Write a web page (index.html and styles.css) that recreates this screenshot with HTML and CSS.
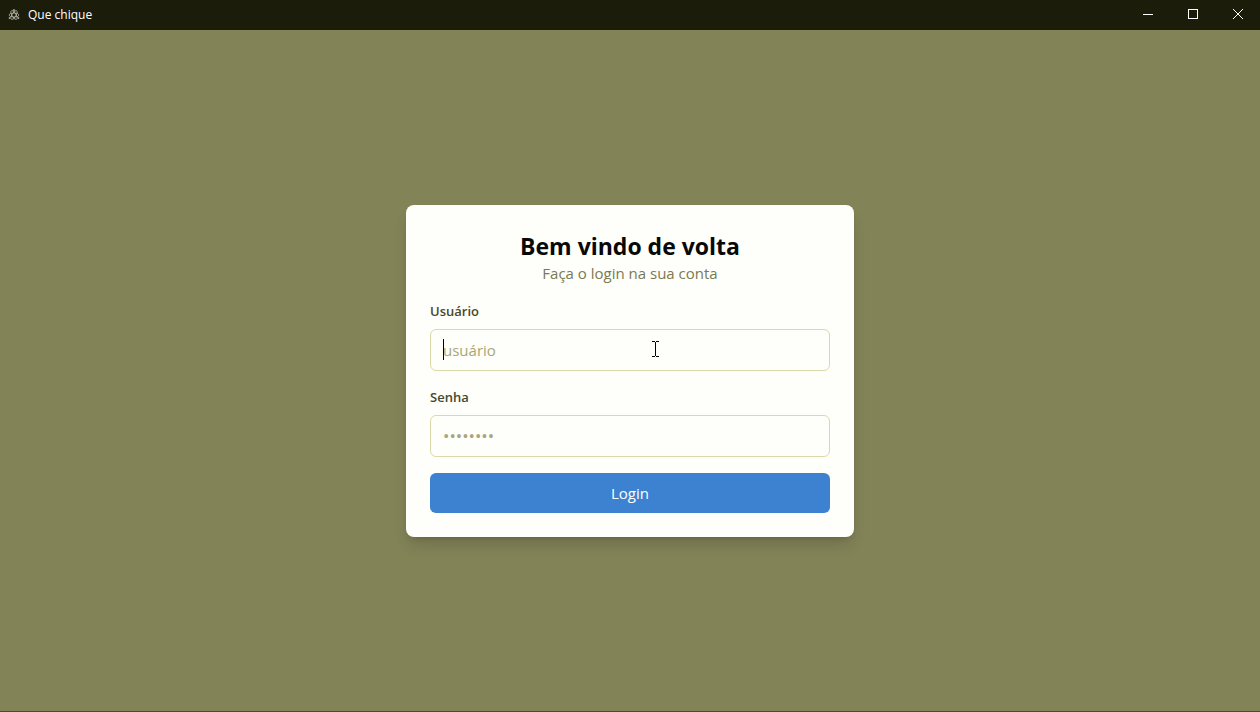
FILE: index.html
```html
<!DOCTYPE html>
<html lang="pt-BR">
<head>
<meta charset="utf-8">
<meta name="viewport" content="width=device-width, initial-scale=1">
<title>Que chique</title>
<link rel="stylesheet" href="styles.css">
</head>
<body>
<header class="titlebar">
  <svg class="app-icon" viewBox="0 0 24 24" fill="none" stroke="currentColor" stroke-width="1.6" aria-hidden="true">
    <ellipse cx="12" cy="12" rx="10" ry="4"/>
    <ellipse cx="12" cy="12" rx="10" ry="4" transform="rotate(60 12 12)"/>
    <ellipse cx="12" cy="12" rx="10" ry="4" transform="rotate(120 12 12)"/>
    <circle cx="12" cy="2" r="1.200" fill="currentColor"/>
    <circle cx="3" cy="18" r="1.200" fill="currentColor"/>
    <circle cx="21" cy="18" r="1.200" fill="currentColor"/>
  </svg>
  <span class="app-name">Que chique</span>
  <div class="controls">
    <button class="control" type="button" aria-label="Minimizar"><svg class="glyph" viewBox="0 0 12 12"><path d="M1 6.500h10"/></svg></button>
    <button class="control" type="button" aria-label="Maximizar"><svg class="glyph" viewBox="0 0 12 12"><rect x="1.5" y="1.5" width="9" height="9"/></svg></button>
    <button class="control" type="button" aria-label="Fechar"><svg class="glyph" viewBox="0 0 12 12"><path d="M1 1l10 10M11 1L1 11"/></svg></button>
  </div>
</header>
<main class="page">
  <form class="card">
    <h1 class="title">Bem vindo de volta</h1>
    <p class="subtitle">Faça o login na sua conta</p>
    <div class="field">
      <label class="label" for="user">Usuário</label>
      <div class="input-wrap">
        <input class="input" id="user" type="text" placeholder="usuário">
        <span class="caret"></span>
        <svg class="pointer" viewBox="0 0 7 16" aria-hidden="true"><path d="M0 .5h3M4 .5h3M3.500 1v14M0 15.500h3M4 15.500h3"/></svg>
      </div>
    </div>
    <div class="field">
      <label class="label" for="password">Senha</label>
      <input class="input input-password" id="password" type="password" placeholder="••••••••">
    </div>
    <button class="submit" type="button">Login</button>
  </form>
</main>
</body>
</html>
```
FILE: styles.css
```css
* {
  box-sizing: border-box;
}

body {
  margin: 0;
  min-height: 100vh;
  display: flex;
  flex-direction: column;
  border-bottom: 1px solid #4a4a30;
  background: #838358;
  font-family: "Open Sans", "Noto Sans", sans-serif;
  font-size: 15px;
  line-height: 24px;
}

.titlebar {
  display: flex;
  align-items: center;
  height: 30px;
  padding-left: 8px;
  background: #1c1c0a;
  color: #fff;
}

.app-icon {
  width: 12px;
  height: 12px;
  margin-right: 8px;
  color: #b4b4a8;
}

.app-name {
  font-size: 12px;
  line-height: 16px;
}

.controls {
  display: flex;
  align-self: stretch;
  margin-left: auto;
}

.control {
  display: flex;
  align-items: center;
  justify-content: center;
  width: 45px;
  padding: 0 0 2px;
  border: 0;
  background: none;
  color: inherit;
}

.glyph {
  width: 12px;
  height: 12px;
  fill: none;
  stroke: currentColor;
}

.page {
  flex: 1;
  display: flex;
  align-items: center;
  justify-content: center;
  padding: 24px;
}

.card {
  width: 100%;
  max-width: 448px;
  padding: 24px;
  border-radius: 8px;
  background: #fefefb;
  box-shadow: 0 10px 15px -3px rgb(0 0 0 / 15%), 0 4px 6px -4px rgb(0 0 0 / 15%);
}

.title {
  margin: 0;
  padding-top: 2px;
  color: #080808;
  font-size: 23px;
  font-weight: 700;
  line-height: 30px;
  text-align: center;
}

.subtitle {
  margin: 0 0 16px;
  color: #7a7a50;
  text-align: center;
}

.field {
  margin-bottom: 16px;
}

.label {
  display: block;
  margin-bottom: 8px;
  color: #48482c;
  font-size: 13px;
  font-weight: 600;
  line-height: 20px;
}

.input-wrap {
  position: relative;
}

.input {
  display: block;
  width: 100%;
  height: 42px;
  padding: 8px 12px;
  border: 1px solid #dadaa8;
  border-radius: 6px;
  background: transparent;
  font: inherit;
}

.input::placeholder {
  color: #a6a678;
  opacity: 1;
}

.input-password {
  font-size: 17px;
}

.caret {
  position: absolute;
  top: 10px;
  left: 13px;
  width: 1px;
  height: 21px;
  background: #000;
}

.pointer {
  position: absolute;
  top: 12px;
  left: 222px;
  width: 7px;
  height: 16px;
  fill: none;
  stroke: #000;
}

.submit {
  display: block;
  width: 100%;
  height: 40px;
  padding: 0 16px;
  border: 0;
  border-radius: 6px;
  background: #3c82d0;
  color: #fff;
  font: inherit;
}
```
